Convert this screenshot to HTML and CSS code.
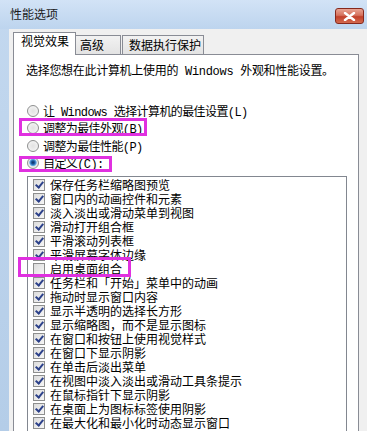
FILE: index.html
```html
<!DOCTYPE html>
<html lang="zh-CN">
<head>
    <meta charset="UTF-8">
    <link rel="stylesheet" href="styles.css">
    <title>性能选项</title>
</head>
<body>
    <div class="titlebar">
        <span class="title">性能选项</span>
        <div class="close">
            <svg width="13" height="9" viewBox="0 0 13 9"><path d="M2 1 L11 8 M11 1 L2 8" stroke="#fff" stroke-width="2.4" stroke-linecap="round"/></svg>
        </div>
    </div>

    <div class="client">
        <div class="tabs">
            <div class="tab active">视觉效果</div>
            <div class="tab tab-adv">高级</div>
            <div class="tab tab-dep">数据执行保护</div>
        </div>

        <div class="panel">
            <p class="desc">选择您想在此计算机上使用的 Windows 外观和性能设置。</p>

            <div class="radios">
                <div class="opt"><span class="radio"></span>让 Windows 选择计算机的最佳设置(L)</div>
                <div class="opt"><span class="radio"></span>调整为最佳外观(B)</div>
                <div class="opt"><span class="radio"></span>调整为最佳性能(P)</div>
                <div class="opt"><span class="radio on"></span>自定义(C):</div>
            </div>

            <div class="list">
                <div class="item"><span class="check on"></span>保存任务栏缩略图预览</div>
                <div class="item"><span class="check on"></span>窗口内的动画控件和元素</div>
                <div class="item"><span class="check on"></span>淡入淡出或滑动菜单到视图</div>
                <div class="item"><span class="check on"></span>滑动打开组合框</div>
                <div class="item"><span class="check on"></span>平滑滚动列表框</div>
                <div class="item"><span class="check on"></span>平滑屏幕字体边缘</div>
                <div class="item"><span class="check"></span>启用桌面组合</div>
                <div class="item"><span class="check on"></span>任务栏和「开始」菜单中的动画</div>
                <div class="item"><span class="check on"></span>拖动时显示窗口内容</div>
                <div class="item"><span class="check on"></span>显示半透明的选择长方形</div>
                <div class="item"><span class="check on"></span>显示缩略图，而不是显示图标</div>
                <div class="item"><span class="check on"></span>在窗口和按钮上使用视觉样式</div>
                <div class="item"><span class="check on"></span>在窗口下显示阴影</div>
                <div class="item"><span class="check on"></span>在单击后淡出菜单</div>
                <div class="item"><span class="check on"></span>在视图中淡入淡出或滑动工具条提示</div>
                <div class="item"><span class="check on"></span>在鼠标指针下显示阴影</div>
                <div class="item"><span class="check on"></span>在桌面上为图标标签使用阴影</div>
                <div class="item"><span class="check on"></span>在最大化和最小化时动态显示窗口</div>
            </div>

            <!-- annotation boxes -->
            <div class="mark mark-best"></div>
            <div class="mark mark-custom"></div>
            <div class="mark mark-compose"></div>
        </div>
    </div>
</body>
</html>
```

FILE: styles.css
```css
body {
    margin: 0;
    width: 367px;
    height: 431px;
    overflow: hidden;
    background: linear-gradient(to bottom, #c3d8ef, #b4cde8);
    font-family: "Liberation Mono", "Noto Sans CJK SC", monospace;
    font-size: 12px;
    color: #000;
}

.titlebar {
    height: 29px;
    display: flex;
    justify-content: space-between;
    align-items: flex-start;
    background: linear-gradient(to bottom, #d2e3f6, #bdd4ee);
}

.title {
    padding: 9px 0 0 10px;
    line-height: 14px;
    color: #1b1b1b;
}

.close {
    width: 29px;
    height: 16px;
    margin: 8px 3px 0 0;
    box-sizing: border-box;
    border: 1px solid #86281c;
    border-radius: 3px;
    background: linear-gradient(to bottom, #e9a493 0%, #d5715d 45%, #c2402a 55%, #d36a4f 100%);
    display: flex;
    align-items: center;
    justify-content: center;
}

.client {
    margin-left: 9px;
    height: 402px;
    background: #f0f0f0;
    padding: 3px 0 0 4px;
    box-sizing: border-box;
}

.tabs {
    display: flex;
    align-items: flex-start;
    height: 23px;
    position: relative;
    z-index: 1;
    margin-bottom: -1px;
}

.tab {
    box-sizing: border-box;
    border: 1px solid #898c95;
    border-bottom: none;
    line-height: 14px;
    margin-top: 3px;
    height: 19px;
    padding-top: 4px;
    background: linear-gradient(to bottom, #f2f2f2, #e3e3e3);
    white-space: nowrap;
}

.tab.active {
    margin-top: 0;
    height: 23px;
    width: 63px;
    padding: 3px 0 0 7px;
    background: #fff;
}

.tab-adv {
    width: 45px;
    padding-left: 4px;
    border-left: none;
}

.tab-dep {
    width: 82px;
    padding-left: 6px;
    margin-left: 1px;
}

.panel {
    position: relative;
    width: 346px;
    height: 400px;
    box-sizing: border-box;
    background: #fff;
    border: 1px solid #898c95;
    padding: 10px 0 0 12px;
}

.desc {
    margin: 0;
    line-height: 14px;
    letter-spacing: -0.3px;
}

.radios {
    margin-top: 23px;
}

.opt {
    display: flex;
    align-items: center;
    height: 17.5px;
    white-space: nowrap;
    letter-spacing: -0.6px;
}

.radio {
    width: 12px;
    height: 12px;
    box-sizing: border-box;
    margin: 0 4px 0 1px;
    border-radius: 50%;
    border: 1px solid #8e8f8f;
    background: radial-gradient(circle at 50% 50%, #e2e2e2 0%, #ececec 45%, #f8f8f8 100%);
}

.radio.on {
    background: radial-gradient(circle at 50% 45%, #0c2c5a 0%, #1f5ea8 25%, #6fb2ea 45%, #e8e8e8 55%, #f8f8f8 100%);
}

.list {
    margin: 4px 0 0 1px;
    width: 320px;
    height: 260px;
    box-sizing: border-box;
    border: 1px solid #828790;
    padding: 1px 0 0 5px;
}

.item {
    display: flex;
    align-items: center;
    height: 14px;
    white-space: nowrap;
}

.check {
    position: relative;
    width: 12px;
    height: 12px;
    box-sizing: border-box;
    margin-right: 5px;
    border: 1px solid #8e8f8f;
    background: linear-gradient(135deg, #dcdcdc, #f6f6f6);
}

.check.on::after {
    content: "";
    position: absolute;
    left: 3px;
    top: 0px;
    width: 3px;
    height: 6px;
    border-right: 2px solid #2c418a;
    border-bottom: 2px solid #2c418a;
    transform: rotate(40deg);
}

.mark {
    position: absolute;
    box-sizing: border-box;
    border: 3px solid #e030e0;
}

.mark-best {
    left: 5px;
    top: 63px;
    width: 128px;
    height: 18px;
}

.mark-custom {
    left: 5px;
    top: 101px;
    width: 93px;
    height: 16px;
}

.mark-compose {
    left: 4px;
    top: 202px;
    width: 113px;
    height: 20px;
}
```
